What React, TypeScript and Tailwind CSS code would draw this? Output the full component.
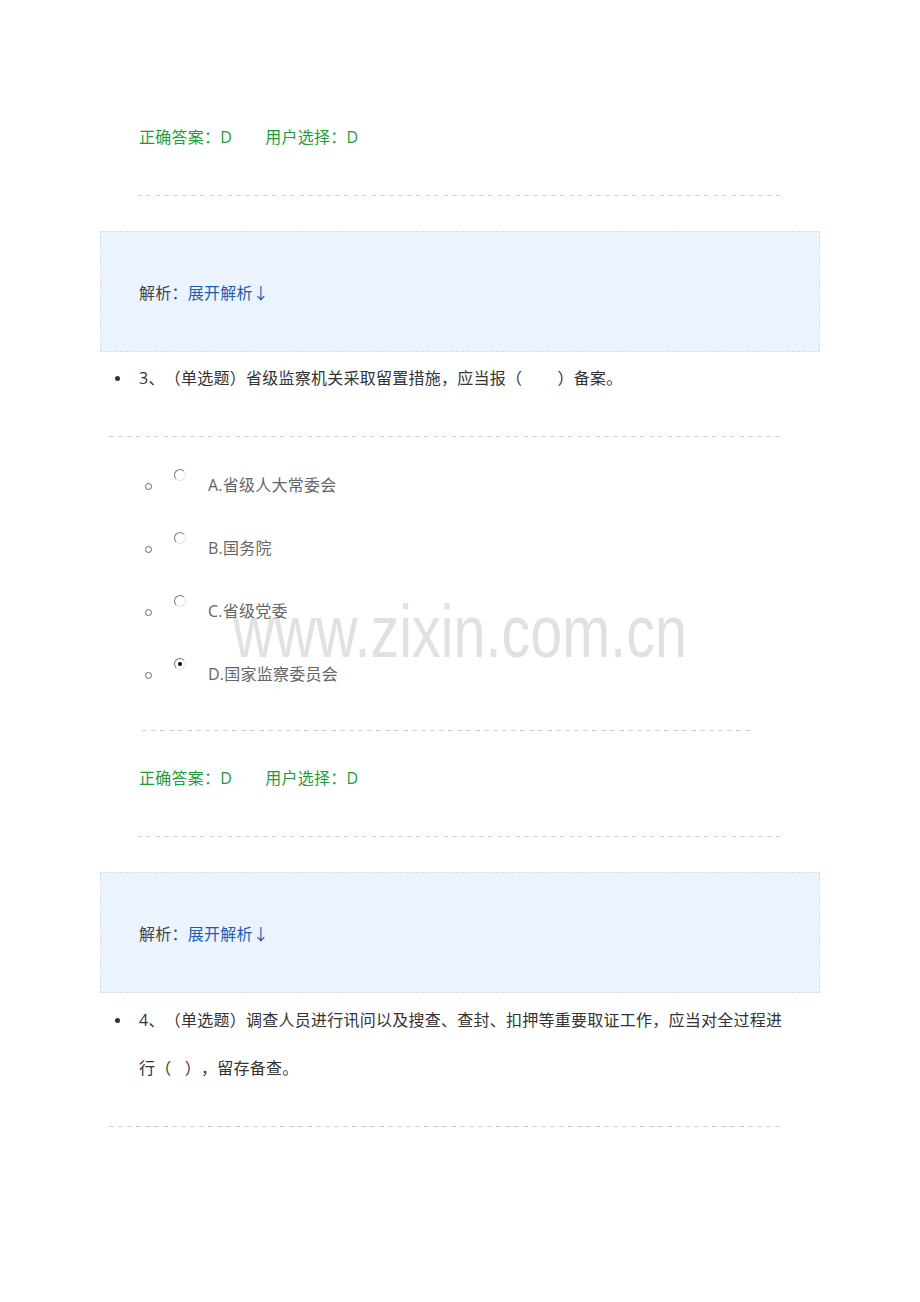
import React from 'react';

const font = { fontFamily: '"Open Sans", "Noto Sans CJK SC", sans-serif' };

function Dashed({ className }: { className: string }) {
  return (
    <div
      className={`h-px bg-[repeating-linear-gradient(90deg,#d2d2d2_0_5px,transparent_5px_9px)] ${className}`}
    />
  );
}

function Answer({ correct, chosen }: { correct: string; chosen: string }) {
  return (
    <div className="ml-[139px] flex h-[48px] items-center text-[16px] text-[#1f9b3d]">
      <span>正确答案：{correct}</span>
      <span className="ml-[33px]">用户选择：{chosen}</span>
    </div>
  );
}

function Analysis() {
  return (
    <div className="ml-[100px] flex h-[121px] w-[720px] items-center border border-dashed border-[#d9dde3] bg-[#ebf3fe] pl-[38px] pt-[3px] text-[16px]">
      <span className="text-[#444]">解析：</span>
      <span className="text-[#1b5fb2]">展开解析↓</span>
    </div>
  );
}

function Question({ children }: { children: React.ReactNode }) {
  return (
    <div className="relative ml-[139px] w-[650px] text-[16px] leading-[48px] text-[#333]">
      <span className="absolute left-[-24px] top-[22px] h-[5px] w-[5px] rounded-full bg-[#333]" />
      {children}
    </div>
  );
}

function Radio({ checked }: { checked?: boolean }) {
  return (
    <span className="flex h-[12px] w-[12px] items-center justify-center rounded-full border-[1.5px] border-[#777] border-b-[#e6e6e6] border-r-[#e6e6e6]">
      {checked && <span className="h-[4px] w-[4px] rounded-full bg-black" />}
    </span>
  );
}

function Option({ label, checked }: { label: string; checked?: boolean }) {
  return (
    <div className="relative flex h-[63px] items-center">
      <span className="ml-[145px] mt-[4px] h-[7px] w-[7px] rounded-full border border-[#666]" />
      <span className="ml-[22px] -mt-[20px]">
        <Radio checked={checked} />
      </span>
      <span className="ml-[22px] text-[16px] text-[#666]">{label}</span>
    </div>
  );
}

export default function App() {
  return (
    <div
      className="relative min-h-[1302px] w-[920px] bg-white tracking-[0.25px] [text-spacing-trim:space-all]"
      style={font}
    >
      <div className="pt-[113px]" />
      <Answer correct="D" chosen="D" />
      <Dashed className="ml-[137px] mt-[34px] w-[645px]" />
      <div className="mt-[35px]">
        <Analysis />
      </div>
      <div className="mt-[2px]">
        <Question>
          3、（单选题）省级监察机关采取留置措施，应当报（&nbsp;&nbsp;&nbsp;&nbsp;&nbsp;&nbsp;&nbsp;&nbsp;）备案。
        </Question>
      </div>
      <Dashed className="ml-[109px] mt-[34px] w-[673px]" />
      <div className="mt-[16px]">
        <Option label="A.省级人大常委会" />
        <Option label="B.国务院" />
        <Option label="C.省级党委" />
        <Option label="D.国家监察委员会" checked />
      </div>
      <Dashed className="ml-[142px] mt-[25px] w-[608px]" />
      <div className="mt-[23px]">
        <Answer correct="D" chosen="D" />
      </div>
      <Dashed className="ml-[137px] mt-[34px] w-[645px]" />
      <div className="mt-[35px]">
        <Analysis />
      </div>
      <div className="mt-[3px]">
        <Question>
          4、（单选题）调查人员进行讯问以及搜查、查封、扣押等重要取证工作，应当对全过程进行（&nbsp;&nbsp;&nbsp;），留存备查。
        </Question>
      </div>
      <Dashed className="ml-[109px] mt-[34px] w-[673px]" />

      {/* watermark */}
      <div
        className="pointer-events-none absolute left-[233px] top-[594px] origin-left scale-x-[0.767] text-[75px] leading-none tracking-normal text-[#dedede] opacity-90"
        style={{ fontFamily: '"Liberation Sans", Arial, sans-serif' }}
      >
        www.zixin.com.cn
      </div>
    </div>
  );
}
